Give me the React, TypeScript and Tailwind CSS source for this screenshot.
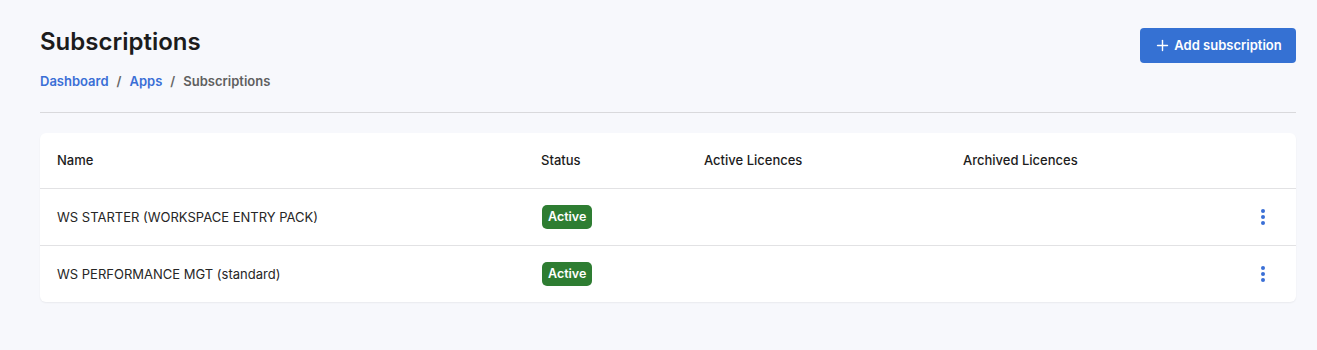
import { Plus } from 'lucide-react'

const ROWS = [
  { name: 'WS STARTER (WORKSPACE ENTRY PACK)', status: 'Active' },
  { name: 'WS PERFORMANCE MGT (standard)', status: 'Active' },
]

function Kebab() {
  return (
    <button className="flex flex-col items-center gap-[2px] p-1" aria-label="More actions">
      <span className="block h-[4px] w-[4px] rounded-full bg-[#3a6fd6]" />
      <span className="block h-[4px] w-[4px] rounded-full bg-[#3a6fd6]" />
      <span className="block h-[4px] w-[4px] rounded-full bg-[#3a6fd6]" />
    </button>
  )
}

export default function App() {
  return (
    <div className="min-h-[350px] bg-[#f7f8fc] pt-7 pr-[21px] pl-10 font-['Inter',sans-serif] text-[#1f1f1f]">
      {/* Header */}
      <div className="flex items-start justify-between">
        <div>
          <h1 className="mt-[1px] text-[24px] leading-[26px] font-semibold text-[#1c1c1c]">Subscriptions</h1>
          <nav className="mt-[17px] flex items-center gap-2 text-[13px] font-semibold">
            <a href="#" className="text-[#3a6fd6]">Dashboard</a>
            <span className="text-[#666]">/</span>
            <a href="#" className="text-[#3a6fd6]">Apps</a>
            <span className="text-[#666]">/</span>
            <span className="text-[#5f5f5f]">Subscriptions</span>
          </nav>
        </div>
        <button className="flex h-[35px] w-[156px] items-center justify-center gap-[3px] rounded-[4px] bg-[#3571d3] text-[13px] font-semibold text-white">
          <Plus size={17} strokeWidth={2} />
          Add subscription
        </button>
      </div>

      <div className="mt-[20px] h-px bg-[#d9d9dc]" />

      {/* Table card */}
      <div className="mt-5 rounded-md bg-white shadow-[0_1px_2px_rgba(0,0,0,0.06)]">
        <div className="grid h-[56px] grid-cols-[485px_163px_259px_1fr_64px] items-center border-b border-[#e2e2e4] pt-[2px] text-[13px] font-medium text-[#1c1c1c]">
          <div className="pl-[17px]">Name</div>
          <div className="pl-[16px]">Status</div>
          <div className="pl-[16px]">Active Licences</div>
          <div className="pl-[16px]">Archived Licences</div>
          <div />
        </div>
        {ROWS.map((row, i) => {
          const last = i === ROWS.length - 1
          return (
            <div
              key={row.name}
              className={`grid grid-cols-[485px_163px_259px_1fr_64px] items-center text-[13px] text-[#262626] ${last ? 'h-[56px]' : 'h-[57px] border-b border-[#e2e2e4]'}`}
            >
              <div className="pt-[2px] pl-[17px]">{row.name}</div>
              <div className="pl-[17px]">
                <span className="inline-flex h-[24px] items-center rounded-[5px] bg-[#2e7d32] px-[6px] pt-[1px] text-[12.5px] font-semibold text-white">
                  {row.status}
                </span>
              </div>
              <div />
              <div />
              <div className="flex justify-center pr-[2px]">
                <Kebab />
              </div>
            </div>
          )
        })}
      </div>
    </div>
  )
}
